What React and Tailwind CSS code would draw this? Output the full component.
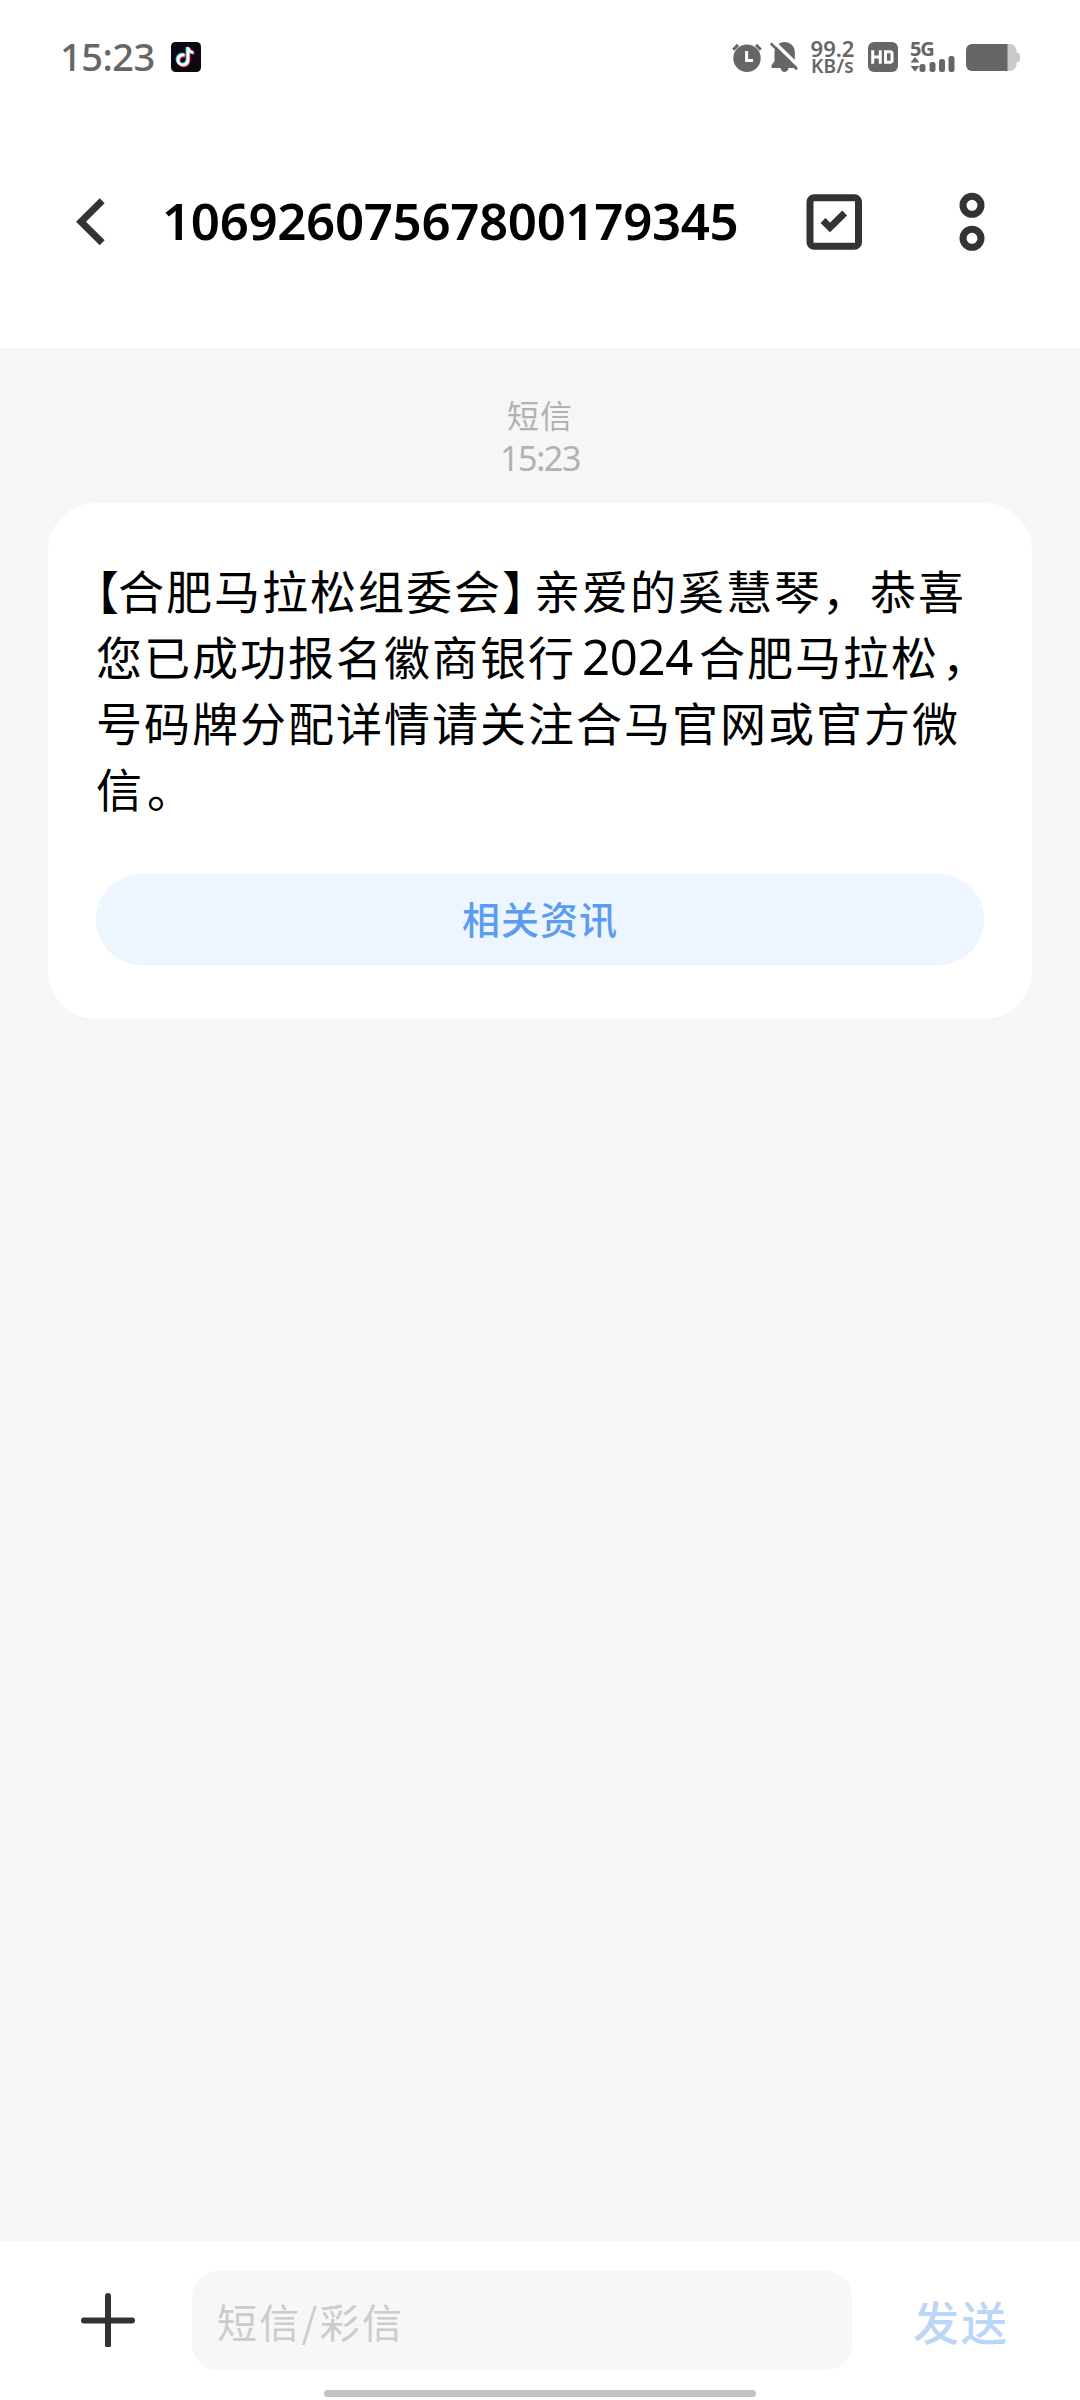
import React from "react";

function StatusBar() {
  return (
    <div className="flex h-[114px] items-center pl-[60px] pr-[60px] text-[#666666]">
      <span className="-mt-[2px] w-[111px] font-['Noto_Sans'] text-[38px] leading-[38px] font-medium tracking-[-0.5px]">15:23</span>
      <svg className="h-[30px] w-[30px]" viewBox="0 0 30 30">
        <rect width="30" height="30" rx="4.5" fill="#0b0a12" />
        <g fill="none" strokeWidth="3.2">
          <path d="M13.6 13.2a5 5 0 1 0 3.4 5V5.6c.6 3 2.400 4.600 5.400 5" stroke="#2fe6e0" transform="translate(-.8 -.6)" />
          <path d="M13.6 13.2a5 5 0 1 0 3.4 5V5.600c.6 3 2.400 4.600 5.400 5" stroke="#f5305a" transform="translate(.8 .7)" />
          <path d="M13.6 13.2a5 5 0 1 0 3.4 5V5.600c.6 3 2.400 4.600 5.400 5" stroke="#fff" strokeWidth="2.8" />
        </g>
      </svg>
      <div className="ml-auto flex items-center">
        <svg className="h-[30px] w-[30px]" viewBox="0 0 30 30">
          <circle cx="15" cy="16.300" r="13.700" fill="#666" />
          <path d="M1.200 7.700 6 2.900M28.800 7.700 24 2.900" stroke="#666" strokeWidth="3" />
          <path d="M14.600 9v9.500h6.400" fill="none" stroke="#fff" strokeWidth="3" />
        </svg>
        <svg className="ml-[8px] h-[30px] w-[28px]" viewBox="0 0 28 30">
          <path d="M14.500 0C20 0 24.800 4.300 24.800 10v9l2.200 5.500V26h-8.500c-.5 2.400-2 4-4 4s-3.500-1.600-4-4H1.500v-2.500L4.500 19v-9C4.500 4.300 9 0 14.500 0Z" fill="#666" />
          <path d="M3.500-.5 30 25.500" stroke="#fff" strokeWidth="3.500" />
          <path d="M.8 1.500 27 27.300" stroke="#666" strokeWidth="2.600" />
        </svg>
        <div className="ml-[11px] flex w-[47px] flex-col items-center whitespace-nowrap font-['Noto_Sans']">
          <span className="text-[22px] leading-[18px] font-semibold">99.2</span>
          <span className="text-[19px] leading-[19px] font-semibold tracking-[0.3px]">KB/s</span>
        </div>
        <svg className="ml-[12px] h-[30px] w-[30px]" viewBox="0 0 30 30">
          <rect width="30" height="30" rx="6" fill="#666" />
          <path d="M4.700 8.200v13.600M12.300 8.200v13.600M4.700 15h7.600M17.500 9.700h5.300l1.200 1.200v8.200l-1.200 1.200h-5.300z" fill="none" stroke="#fff" strokeWidth="3" />
        </svg>
        <div className="ml-[12px] flex h-[30px] w-[46px] flex-col">
          <span className="font-['Noto_Sans'] text-[20px] leading-[14px] font-bold tracking-[-1.2px]">5G</span>
          <svg className="h-[16px] w-[46px] overflow-visible" viewBox="0 0 46 16" fill="#666">
            <path d="M0.500 6.500 5 1l4.500 5.500zM0.500 10h9l-4.500 5.500z" />
            <rect x="9.500" y="8" width="6" height="8" rx="2.500" />
            <rect x="19.500" y="6" width="6" height="10" rx="2.500" />
            <rect x="29" y="3" width="6" height="13" rx="2.500" />
            <rect x="38.500" y="0" width="6" height="16" rx="2.500" />
          </svg>
        </div>
        <svg className="ml-[10px] h-[27px] w-[54px]" viewBox="0 0 54 27">
          <path d="M41 0h2.500c4 0 7 3 7 7v1.500c2 0 3.500 1 3.500 3v4c0 2-1.500 3-3.500 3V20c0 4-3 7-7 7H41z" fill="#c9c9c9" />
          <path d="M6 0h35.500v27H6a6 6 0 0 1-6-6V6a6 6 0 0 1 6-6Z" fill="#666" />
        </svg>
      </div>
    </div>
  );
}

function Header() {
  return (
    <div className="flex h-[234px] items-start pt-[78px]">
      <svg className="ml-[72px] mt-[2px] h-[56px] w-[36px]" viewBox="0 0 36 56">
        <path d="M30.200 6.700 9 27.700l21.200 21" fill="none" stroke="#333" strokeWidth="7" />
      </svg>
      <div className="-mt-[2px] ml-[54px] w-[590px] whitespace-nowrap font-['Noto_Sans'] text-[51px] leading-[60px] font-semibold tracking-[-0.35px] text-black">
        10692607567800179345
      </div>
      <svg className="ml-[54px] mt-[2px] h-[56px] w-[56px]" viewBox="0 0 56 56">
        <rect x="4" y="3.700" width="48.500" height="48.500" rx="4" fill="none" stroke="#333" strokeWidth="7" />
        <path d="m17 26.500 7 7 14.700-14.500" fill="none" stroke="#333" strokeWidth="6.800" strokeLinejoin="miter" />
      </svg>
      <svg className="ml-[97px] h-[60px] w-[26px]" viewBox="0 0 26 60" fill="none" stroke="#333" strokeWidth="7">
        <circle cx="13" cy="13.300" r="9" />
        <circle cx="13" cy="46.300" r="9" />
      </svg>
    </div>
  );
}

function Message() {
  return (
    <div className="mx-[48px] h-[516px] rounded-[48px] bg-white px-[48px] pt-[53px]">
      <div className="whitespace-nowrap text-[46px] leading-[66px] tracking-[2px] text-black [text-spacing-trim:space-all]">
        <div className="flex">
          <span className="w-[22px] shrink-0 tracking-normal [font-feature-settings:'halt']">【</span>
          <span className="shrink-0">合肥马拉松组委会</span>
          <span className="w-[32px] shrink-0 tracking-normal [font-feature-settings:'halt']">】</span>
          <span className="shrink-0">亲爱的奚慧琴，恭喜</span>
        </div>
        <div className="flex">
          <span className="shrink-0">您已成功报名徽商银行</span>
          <span className="w-[123px] shrink-0 pt-[2px] text-center font-['Noto_Sans'] text-[49px] leading-[64px] tracking-[-0.3px]">2024</span>
          <span className="shrink-0">合肥马拉松</span>
          <span className="ml-[3px] shrink-0">，</span>
        </div>
        <div>号码牌分配详情请关注合马官网或官方微</div>
        <div className="flex">
          <span>信</span>
          <span className="ml-[3px]">。</span>
        </div>
      </div>
      <button className="mt-[54px] flex h-[91px] w-full items-center justify-center rounded-full bg-[#edf5ff] pb-[4px] text-[38px] font-medium tracking-[1px] text-[#5c9cf0]">
        相关资讯
      </button>
    </div>
  );
}

function Composer() {
  return (
    <div className="flex h-[159px] flex-col bg-white">
      <div className="mt-[30px] flex h-[99px] items-center">
        <svg className="-mt-[2px] ml-[81px] h-[54px] w-[54px]" viewBox="0 0 54 54">
          <path d="M27 3v49M3 27.500h48" stroke="#333" strokeWidth="6" strokeLinecap="round" />
        </svg>
        <div className="ml-[57px] flex h-[99px] w-[660px] items-center rounded-[26px] bg-[#f7f7f7] pl-[25px] text-[40px] tracking-[2.3px] text-[#cccccc]">
          短信/彩信
        </div>
        <span className="ml-[61px] text-[46px] font-medium tracking-[2px] text-[#bcd6f8]">发送</span>
      </div>
      <div className="mx-auto mt-[20px] h-[7px] w-[432px] rounded-full bg-[#c2c2c2]" />
    </div>
  );
}

export default function App() {
  return (
    <div className="flex h-[2400px] w-[1080px] flex-col overflow-hidden bg-white font-['Noto_Sans_CJK_SC',sans-serif]">
      <StatusBar />
      <Header />
      <main className="flex-1 bg-[#f6f6f6]">
        <div className="flex h-[155px] flex-col items-center pt-[44px] text-[#b2b2b2]">
          <span className="text-[32px] leading-[44px] tracking-[1px]">短信</span>
          <span className="font-['Noto_Sans'] text-[34px] leading-[44px] tracking-[-1.4px]">15:23</span>
        </div>
        <Message />
      </main>
      <Composer />
    </div>
  );
}
